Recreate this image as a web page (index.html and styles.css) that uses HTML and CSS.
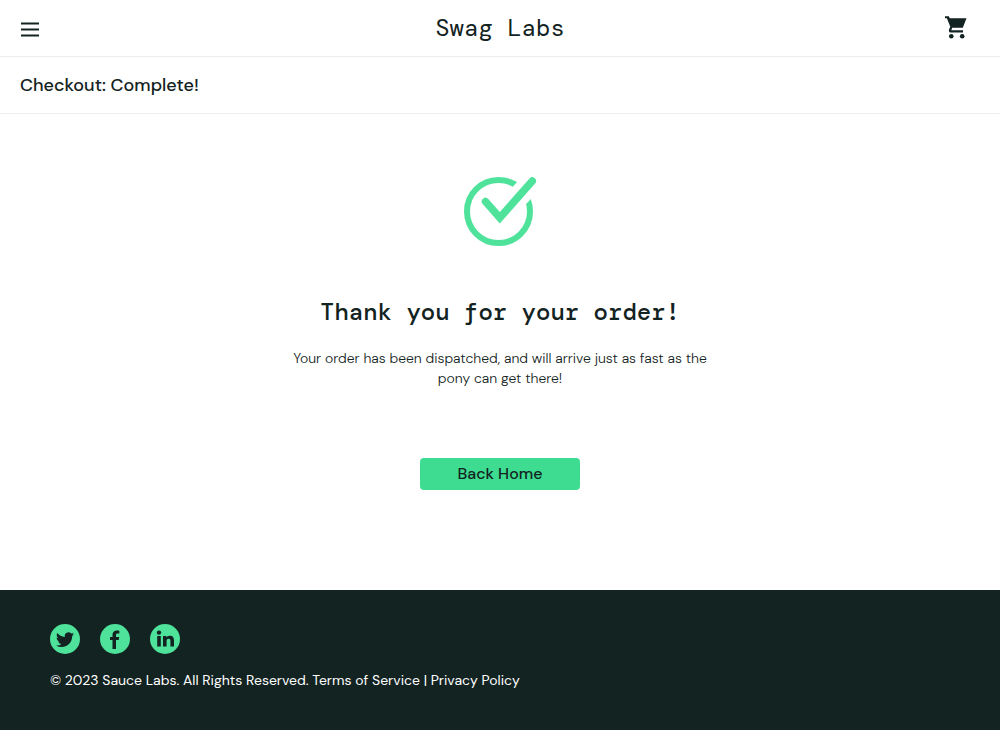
FILE: index.html
```html
<!DOCTYPE html>
<html lang="en">
<head>
<meta charset="utf-8">
<meta name="viewport" content="width=device-width, initial-scale=1">
<title>Swag Labs</title>
<link rel="stylesheet" href="styles.css">
</head>
<body>
<header class="header">
  <div class="header-bar">
    <button class="icon-button" type="button" aria-label="Open Menu">
      <svg width="20" height="16" viewBox="0 0 20 16"><path d="M1 2.500h18M1 8.500h18M1 14.500h18" fill="none" stroke="currentColor" stroke-width="2"/></svg>
    </button>
    <div class="logo">Swag Labs</div>
    <a class="cart" href="#cart" aria-label="Shopping cart">
      <svg width="24" height="24" viewBox="0 0 24 24"><path fill="currentColor" d="M1 1.200h3.800l1 2H22.500L18.800 12.800H8.200L7.300 15.200H19v2.300H6.500C5 17.500 4.400 15.500 5.200 14L6.300 11.800 2.900 3.200H1z"/><circle cx="7.300" cy="21.300" r="2.300" fill="currentColor"/><circle cx="18.200" cy="21.300" r="2.300" fill="currentColor"/></svg>
    </a>
  </div>
  <div class="subheader"><span class="title">Checkout: Complete!</span></div>
</header>
<main class="complete">
  <svg class="check" width="74" height="70" viewBox="13 11 74 70" role="img" aria-label="Order complete">
    <circle cx="48.500" cy="46.500" r="31.500" fill="none" stroke="#4ee29b" stroke-width="6"/>
    <path d="M56 45L90 8" fill="none" stroke="#fff" stroke-width="21.500"/>
    <path d="M35.500 36.500L49.800 52.800L82.300 16" fill="none" stroke="#4ee29b" stroke-width="7.500" stroke-linecap="round"/>
  </svg>
  <h2 class="thanks">Thank you for your order!</h2>
  <p class="message">Your order has been dispatched, and will arrive just as fast as the pony can get there!</p>
  <button class="home-button" type="button">Back Home</button>
</main>
<footer class="footer">
  <ul class="social">
    <li><a class="social-link" href="#twitter" aria-label="Twitter"><svg width="18" height="18" viewBox="0 -1 24 24"><path fill="currentColor" d="M23.950 4.570a10 10 0 0 1-2.820.77 4.960 4.960 0 0 0 2.160-2.720c-.95.55-2 .95-3.130 1.180a4.920 4.920 0 0 0-8.380 4.480C7.690 8.090 4.070 6.130 1.640 3.160a4.820 4.820 0 0 0-.67 2.480c0 1.710.87 3.210 2.190 4.090a4.900 4.900 0 0 1-2.230-.61v.06a4.920 4.920 0 0 0 3.950 4.830 5 5 0 0 1-2.210.08 4.940 4.940 0 0 0 4.600 3.420A9.870 9.870 0 0 1 0 19.540a13.990 13.990 0 0 0 7.560 2.210c9.050 0 14-7.500 14-13.980 0-.21 0-.42-.02-.63a9.940 9.940 0 0 0 2.410-2.570z"/></svg></a></li>
    <li><a class="social-link" href="#facebook" aria-label="Facebook"><svg width="20" height="20" viewBox="0 0 20 20"><path fill="currentColor" d="M7.500 20v-9H5V8h2.500V5.800C7.500 3.300 9.200 1.500 11.800 1.500c1 0 2 .1 2.500.2v2.900h-1.700c-1.300 0-1.600.7-1.600 1.500V8h3.200l-.5 3H11v9z"/></svg></a></li>
    <li><a class="social-link" href="#linkedin" aria-label="LinkedIn"><svg width="20" height="20" viewBox="0 0 20 20"><circle cx="4" cy="3.600" r="2.200" fill="currentColor"/><path fill="currentColor" d="M2.200 7h3.600v10.500H2.200zM8 7h3.400v1.500c.6-1 1.700-1.800 3.400-1.800 3.300 0 4.200 2.100 4.200 5v5.800h-3.600v-5.200c0-1.400-.2-2.600-1.800-2.600s-2 1.200-2 2.600v5.200H8z"/></svg></a></li>
  </ul>
  <div class="copyright">© 2023 Sauce Labs. All Rights Reserved. Terms of Service | Privacy Policy</div>
</footer>
</body>
</html>
```
FILE: styles.css
```css
* {
  box-sizing: border-box;
}

body {
  margin: 0;
  min-height: 100vh;
  display: flex;
  flex-direction: column;
  background: #fff;
  color: #132322;
  font-family: "DM Sans", Inter, "Open Sans", sans-serif;
  font-size: 14px;
  line-height: 20px;
}

svg {
  display: block;
}

.header-bar {
  display: grid;
  grid-template-columns: 1fr auto 1fr;
  align-items: center;
  height: 57px;
  padding: 0 32px 0 20px;
  border-bottom: 1px solid #ededed;
}

.icon-button {
  justify-self: start;
  padding: 2px 0 0;
  border: 0;
  background: none;
  color: inherit;
}

.logo {
  padding-left: 12px;
  font-family: "DM Mono", "Liberation Mono", monospace;
  font-size: 24px;
  line-height: 32px;
}

.cart {
  justify-self: end;
  padding-bottom: 2px;
  color: inherit;
}

.subheader {
  display: flex;
  align-items: center;
  height: 57px;
  padding: 0 20px;
  border-bottom: 1px solid #ededed;
}

.title {
  font-size: 18px;
  font-weight: 500;
}

.complete {
  flex: 1;
  display: flex;
  flex-direction: column;
  align-items: center;
  padding: 62px 20px 100px;
  text-align: center;
}

.thanks {
  margin: 50px 0 20px;
  font-family: "DM Mono", "Liberation Mono", monospace;
  font-size: 24px;
  font-weight: 500;
  line-height: 32px;
}

.message {
  max-width: 440px;
  margin: 0 0 70px;
  font-weight: 300;
}

.home-button {
  width: 160px;
  height: 32px;
  padding: 0 0 2px;
  border: 0;
  border-radius: 4px;
  background: #3ddc91;
  color: inherit;
  font-family: inherit;
  font-size: 16px;
  font-weight: 500;
}

.footer {
  min-height: 140px;
  padding: 34px 50px;
  background: #132322;
  color: #fff;
  font-weight: 400;
}

.social {
  display: flex;
  gap: 20px;
  margin: 0 0 16px;
  padding: 0;
  list-style: none;
}

.social-link {
  display: grid;
  place-items: center;
  width: 30px;
  height: 30px;
  border-radius: 50%;
  background: #4ee29b;
  color: #132322;
}
```
